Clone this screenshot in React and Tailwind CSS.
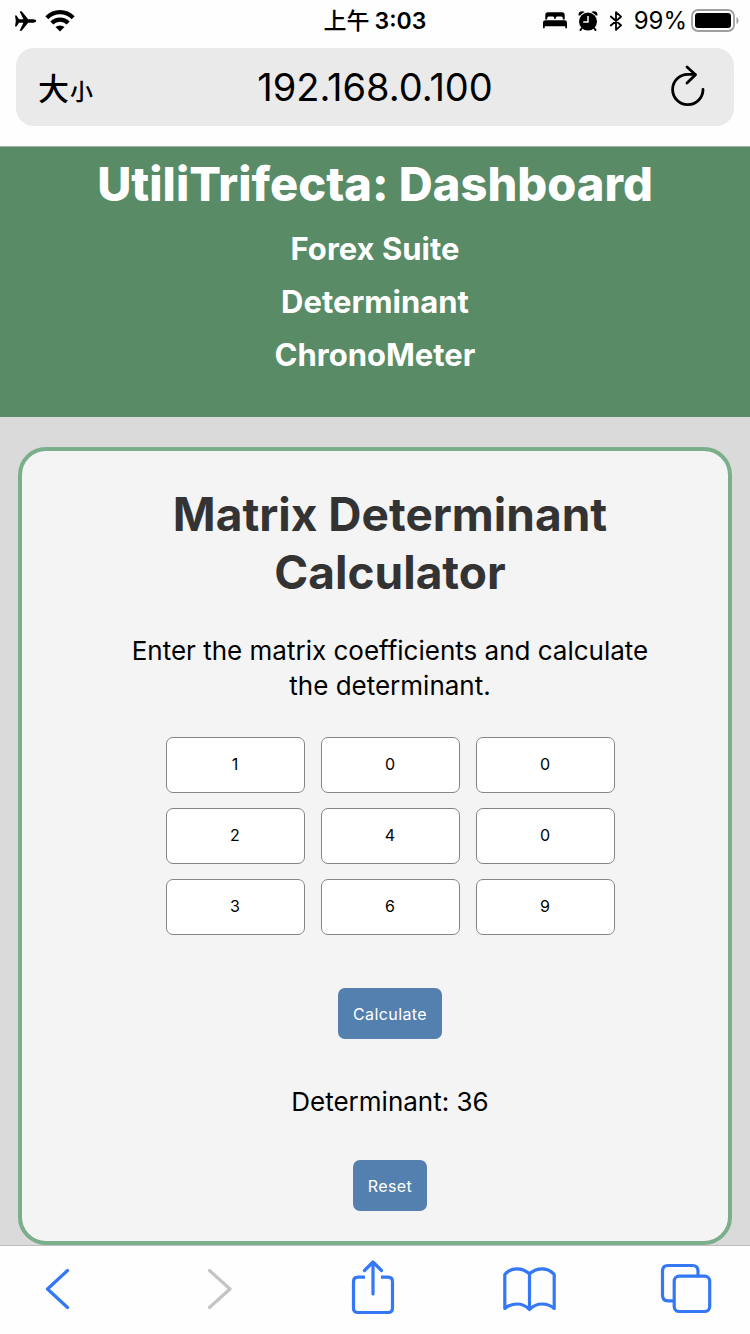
import { useState } from "react";

function StatusBar() {
  return (
    <div className="grid h-12 grid-cols-[1fr_auto_1fr] items-center px-[13px] pb-[7px]">
      <div className="flex items-center gap-[8px] pl-[2px]">
        <svg className="h-[20px] w-[22px]" viewBox="0 0 22 20" aria-hidden="true">
          <path d="M0 4.6H1.5L4 8.3H8.4L4.8.8Q4.6.3 5.2.3H6.2Q6.7.3 7.1.8L13.2 8.3H18.4Q21.3 8.6 21.3 10Q21.3 11.4 18.4 11.7H13.2L7.1 19.2Q6.7 19.7 6.2 19.7H5.2Q4.6 19.7 4.8 19.2L8.4 11.7H4L1.5 15.4H0L.8 10Z" />
        </svg>
        <svg className="h-[22px] w-[30px]" viewBox="0 0 30 22" fill="none" stroke="#000" strokeWidth="4.2" aria-hidden="true">
          <path d="M1.8 7.7Q7.5 2.2 15 2.2T28.2 7.7" />
          <path d="M6.8 12.9Q10.2 9.6 15 9.6T23.2 12.9" />
          <path d="M10.5 17Q12.2 15.4 15 15.4T19.5 17L15 21.6Z" fill="#000" stroke="none" />
        </svg>
      </div>
      <div className="flex items-center gap-[5px] text-[23px] font-semibold leading-7">
        <span className="font-medium">上午</span>
        <span>3:03</span>
      </div>
      <div className="flex items-center justify-end">
        <svg className="h-[17px] w-[24px]" viewBox="0 0 24 17" aria-hidden="true">
          <path d="M2.3 7.6V3Q2.3.3 5 .3H19Q21.7.3 21.7 3V7.6H19.8V5.900Q19.8 4.400 18.3 4.400H14.2Q12.7 4.400 12.7 5.900V7H11.3V5.900Q11.3 4.400 9.8 4.400H5.7Q4.2 4.400 4.2 5.900V7.6Z" />
          <path d="M0 16.3V10.6Q0 8.2 2.4 8.2H21.6Q24 8.2 24 10.6V16.3H22.3V14.3H1.7V16.3Z" />
        </svg>
        <svg className="ml-[11px] h-[20px] w-[20px]" viewBox="0 0 20 20" aria-hidden="true">
          <circle cx="10" cy="10.6" r="9" />
          <path d="M.6 4.4Q0 1.600 2.6.6Q5-.4 6.700 1L5 2Q3 3 2 4.600Z M19.4 4.400Q20 1.600 17.4.6Q15-.4 13.3 1L15 2Q17 3 18 4.600Z" />
          <path d="M4 17L2.500 19M16 17L17.500 19" stroke="#000" strokeWidth="2" strokeLinecap="round" />
          <path d="M10 5V11H5.2" fill="none" stroke="#fff" strokeWidth="1.5" />
        </svg>
        <svg className="ml-[11px] h-[20px] w-[14px]" viewBox="0 0 14 20" fill="none" stroke="#000" strokeWidth="1.8" strokeLinejoin="round" strokeLinecap="round" aria-hidden="true">
          <path d="M1.8 5.5L12 14.3L7 18.8V1.2L12 5.7L1.8 14.5" />
        </svg>
        <span className="ml-[11px] text-[24px] leading-7">99%</span>
        <svg className="-mr-[2px] ml-[4px] h-[23px] w-[48px]" viewBox="0 0 48 23" aria-hidden="true">
          <rect x="1" y="1" width="42" height="21" rx="6" fill="none" stroke="#a0a0a0" strokeWidth="1.8" />
          <rect x="4" y="4" width="36" height="15" rx="3" />
          <path d="M45.5 8Q47.5 9 47.5 11.5T45.5 15Z" fill="#a0a0a0" />
        </svg>
      </div>
    </div>
  );
}

function AddressBar() {
  return (
    <div className="mx-4 mb-[20px] grid h-[78px] grid-cols-[1fr_auto_1fr] items-center rounded-[18px] bg-[#eaeaea] px-[22px]">
      <button type="button" aria-label="大小" className="flex items-baseline gap-px justify-self-start pt-[6px] font-medium leading-10">
        <span className="text-[31px]">大</span>
        <span className="text-[23px]">小</span>
      </button>
      <span className="text-[38px] leading-[48px]">192.168.0.100</span>
      <button type="button" aria-label="Reload" className="justify-self-end pb-[3px] pr-[7px]">
        <svg className="h-[42px] w-[34px]" viewBox="0 0 34 42" fill="none" stroke="#000" strokeWidth="2.8" strokeLinecap="round" strokeLinejoin="round" aria-hidden="true">
          <path d="M32 24.5A15.2 15.2 0 1 1 16.8 9.3H24" />
          <path d="M16 2L24.5 9.8L16 18" />
        </svg>
      </button>
    </div>
  );
}

function SiteHeader() {
  return (
    <header className="border-t border-[#a5b0a8] bg-[#588b66] pb-[36px] pt-[8px] text-center text-white">
      <h1 className="text-[47px] font-extrabold leading-[58px]">UtiliTrifecta: Dashboard</h1>
      <nav className="mt-[9px] flex flex-col items-center text-[31px] font-bold leading-[53px]">
        <a href="#forex">Forex Suite</a>
        <a href="#determinant">Determinant</a>
        <a href="#chronometer">ChronoMeter</a>
      </nav>
    </header>
  );
}

const initial = ["1", "0", "0", "2", "4", "0", "3", "6", "9"];

function det(m) {
  const [a, b, c, d, e, f, g, h, i] = m.map(Number);
  return a * (e * i - f * h) - b * (d * i - f * g) + c * (d * h - e * g);
}

const actionButton = "h-[51px] rounded-[7px] bg-[#5480b0] px-[15px] text-[16px] leading-5 tracking-wide text-white";

function Calculator() {
  const [cells, setCells] = useState(initial);
  const [result, setResult] = useState(det(initial));
  const update = (index, value) => setCells(cells.map((c, i) => (i === index ? value : c)));

  return (
    <section className="flex flex-col items-center rounded-[28px] border-4 border-[#7bae8a] bg-[#f4f4f4] pb-[30px] pl-[60px] pr-[30px] pt-[34px] text-center">
      <h2 className="max-w-[520px] text-[46px] font-bold leading-[58px] text-[#333]">Matrix Determinant Calculator</h2>
      <p className="mt-[32px] max-w-[530px] text-[26px] leading-[35px]">Enter the matrix coefficients and calculate the determinant.</p>
      <div className="mt-[34px] grid grid-cols-3 gap-x-[16px] gap-y-[15px]">
        {cells.map((value, i) => (
          <input
            key={i}
            aria-label={`Row ${Math.floor(i / 3) + 1}, column ${(i % 3) + 1}`}
            inputMode="numeric"
            value={value}
            onChange={(e) => update(i, e.target.value)}
            className="h-14 w-[139px] rounded-[7px] border border-[#858585] bg-white pb-[2px] text-center text-[16px]"
          />
        ))}
      </div>
      <button type="button" className={`mt-[53px] ${actionButton}`} onClick={() => setResult(det(cells))}>Calculate</button>
      <p className="mt-[45px] text-[26px] leading-[35px]">Determinant: {result}</p>
      <button type="button" className={`mt-[41px] ${actionButton}`} onClick={() => { setCells(Array(9).fill("0")); setResult(0); }}>Reset</button>
    </section>
  );
}

function ToolButton({ label, disabled, children }) {
  return (
    <button type="button" aria-label={label} disabled={disabled} className="text-[#3478f6] disabled:text-[#c4c4c4]">
      <svg className="h-[56px] w-[54px]" viewBox="0 0 54 56" fill="none" stroke="currentColor" strokeWidth="3.2" strokeLinecap="round" strokeLinejoin="round" aria-hidden="true">
        {children}
      </svg>
    </button>
  );
}

function Toolbar() {
  return (
    <div className="flex h-[89px] items-start justify-between border-t border-[#bdbdbd] bg-[#fefefe] pl-[31px] pr-[37px] pt-[14px]">
      <ToolButton label="Back"><path d="M36.5 10.500L16.5 29L36.5 47.500" /></ToolButton>
      <ToolButton label="Forward" disabled><path d="M21.5 10.500L42 29L21.5 47.500" /></ToolButton>
      <ToolButton label="Share">
        <path d="M20 17.2H13Q8.5 17.2 8.5 21.7V48Q8.5 52.5 13 52.5H43Q47.5 52.5 47.5 48V21.7Q47.5 17.2 43 17.2H36" strokeLinecap="butt" />
        <path d="M28 34V2.500M19.5 10.500L28 2L36.500 10.500" />
      </ToolButton>
      <ToolButton label="Bookmarks">
        <path d="M27.5 14Q22.5 8.8 15 8.8T2.8 14.5V48.5Q8 44 15 44T27.5 49.5Q33 44 40 44T52.2 48.5V14.5Q47.5 8.8 40 8.8T27.5 14ZM27.5 14V49.5" />
      </ToolButton>
      <ToolButton label="Tabs">
        <path d="M14.5 40.8H9Q3.5 40.8 3.5 35.3V11Q3.5 5.5 9 5.5H33.5Q39 5.5 39 11V16" />
        <rect x="15.2" y="16.2" width="35.5" height="35.3" rx="5" />
      </ToolButton>
    </div>
  );
}

export default function App() {
  return (
    <div className="flex min-h-screen flex-col bg-[#fefefe] font-['Inter','Noto_Sans_CJK_TC',sans-serif] text-black">
      <StatusBar />
      <AddressBar />
      <SiteHeader />
      <main className="grow bg-[#dadada] px-[18px] pt-[30px]">
        <Calculator />
      </main>
      <Toolbar />
    </div>
  );
}
